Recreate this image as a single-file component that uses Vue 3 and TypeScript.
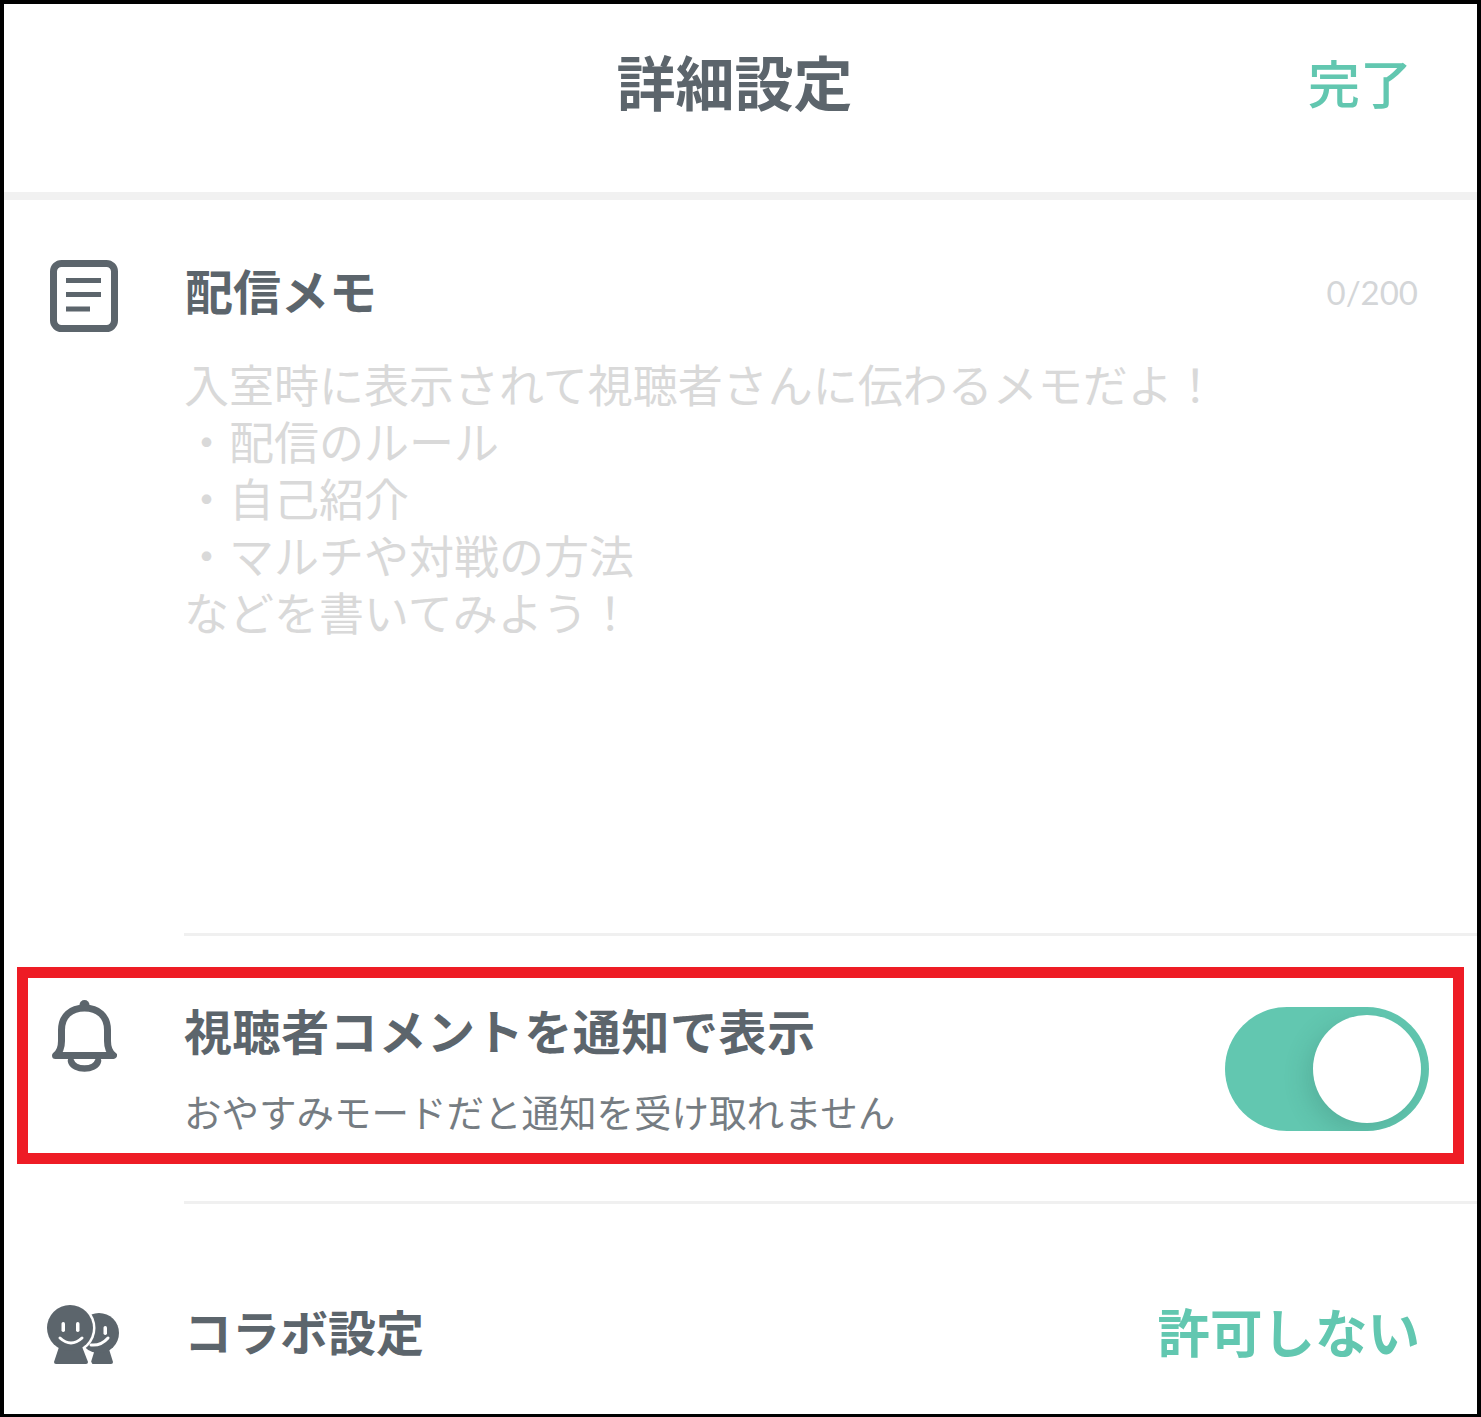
<script setup lang="ts">
const placeholder = `入室時に表示されて視聴者さんに伝わるメモだよ！
・配信のルール
・自己紹介
・マルチや対戦の方法
などを書いてみよう！`;
</script>

<template>
  <div class="frame">
    <header class="header">
      <h1 class="title">詳細設定</h1>
      <button class="done">完了</button>
    </header>

    <section class="memo">
      <svg class="icon-note" viewBox="0 0 68 72" width="68" height="72">
        <rect x="3.5" y="3.5" width="61" height="65" rx="8" fill="none" stroke="#5c656c" stroke-width="7" />
        <path d="M16 20.5H51M16 34.5H51M16 49H40" fill="none" stroke="#5c656c" stroke-width="5" />
      </svg>
      <div class="memo-body">
        <div class="memo-head">
          <h2 class="row-title">配信メモ</h2>
          <span class="count">0/200</span>
        </div>
        <p class="placeholder">{{ placeholder }}</p>
      </div>
    </section>

    <section class="notify">
      <svg class="icon-bell" viewBox="0 0 65 73" width="65" height="73">
        <circle cx="32.5" cy="5" r="5" fill="#5c656c" />
        <path d="M3.5 55.5Q9.5 51 9.5 41V30C9.5 16 19 8 32.5 8S55.5 16 55.5 30V41Q55.5 51 61.5 55.5Z" fill="none" stroke="#5c656c" stroke-width="7" stroke-linejoin="round" />
        <path d="M19 61C21 71 44 71 46 61" fill="none" stroke="#5c656c" stroke-width="6.5" stroke-linecap="round" />
      </svg>
      <div class="notify-text">
        <h2 class="row-title notify-title">視聴者コメントを通知で表示</h2>
        <p class="notify-sub">おやすみモードだと通知を受け取れません</p>
      </div>
      <div class="toggle">
        <span class="knob"></span>
      </div>
      <div class="highlight"></div>
    </section>

    <section class="collab">
      <svg class="icon-collab" viewBox="0 0 74 62" width="74" height="62">
        <path d="M50 42L45 58Q45 60 47 60H65Q67 60 67 58L62 42Z" fill="#5c656c" />
        <circle cx="53" cy="29" r="20" fill="#5c656c" />
        <rect x="57.5" y="22" width="3.5" height="9" rx="1.7" fill="#fff" />
        <path d="M45 41Q55 42 62 34" fill="none" stroke="#fff" stroke-width="3" stroke-linecap="round" />
        <circle cx="24" cy="24" r="25.5" fill="#fff" />
        <path d="M14 38L6 60H44L35 38Z" fill="#fff" stroke="#fff" stroke-width="4" />
        <path d="M14 40L8 58Q8 60 10 60H40Q42 60 42 58L35 40Z" fill="#5c656c" />
        <circle cx="24" cy="24" r="23" fill="#5c656c" />
        <rect x="15.5" y="18" width="3.5" height="10" rx="1.7" fill="#fff" />
        <rect x="30" y="18" width="3.5" height="10" rx="1.7" fill="#fff" />
        <path d="M14 34Q25 44 36 34" fill="none" stroke="#fff" stroke-width="3" stroke-linecap="round" />
      </svg>
      <span class="collab-label">コラボ設定</span>
      <span class="collab-value">許可しない</span>
    </section>
  </div>
</template>

<style>
html,
body {
  margin: 0;
  background: #fff;
}
</style>

<style scoped>
.frame {
  width: 1481px;
  height: 1417px;
  box-sizing: border-box;
  border: 4px solid #000;
  border-bottom-width: 3px;
  background: #fff;
  overflow: hidden;
  font-family: "Noto Sans CJK JP", "Noto Sans", sans-serif;
  color: #5c656c;
}

h1,
h2,
p {
  margin: 0;
  font-weight: inherit;
}

.header {
  height: 196px;
  box-sizing: border-box;
  padding: 0 12px 36px 0;
  display: flex;
  align-items: center;
  justify-content: center;
  position: relative;
  border-bottom: 8px solid #f1f1f1;
}

.title {
  font-size: 59px;
  line-height: 1;
  font-weight: 700;
}

.done {
  position: absolute;
  right: 65px;
  top: 52px;
  padding: 0;
  border: 0;
  background: none;
  font: inherit;
  font-size: 52px;
  line-height: 1;
  font-weight: 500;
  color: #62c7b0;
}

.memo {
  display: flex;
  gap: 67px;
  padding: 60px 59px 0 46px;
  height: 736px;
  box-sizing: border-box;
  position: relative;
}

.memo::after {
  content: "";
  position: absolute;
  left: 180px;
  right: 0;
  bottom: 0;
  height: 3px;
  background: #f0f0f0;
}

.icon-note,
.icon-bell,
.icon-collab {
  flex: none;
}

.memo-body {
  flex: 1;
  min-width: 0;
}

.memo-head {
  display: flex;
  justify-content: space-between;
  height: 64px;
}

.row-title {
  font-size: 48px;
  line-height: 64px;
  font-weight: 700;
}

.memo-head .row-title {
  margin-top: -3px;
}

.count {
  font-family: "Lato", "Noto Sans", sans-serif;
  font-size: 33px;
  line-height: 64px;
  color: #d4d6d8;
}

.placeholder {
  margin: 31px 0 0 -1px;
  font-size: 45px;
  line-height: 57px;
  white-space: pre-line;
  color: #d9d9d9;
}

.notify {
  position: relative;
  height: 268px;
  box-sizing: border-box;
  padding: 64px 48px 0 48px;
  display: flex;
}

.notify::after {
  content: "";
  position: absolute;
  left: 180px;
  right: 0;
  bottom: 0;
  height: 3px;
  background: #f0f0f0;
}

.notify-text {
  margin: -3px 0 0 67px;
  flex: 1;
  min-width: 0;
}

.notify-title {
  font-size: 48px;
  line-height: 64px;
  letter-spacing: 0.6px;
}

.notify-sub {
  margin-top: 25px;
  font-size: 37.5px;
  line-height: 50px;
  color: #757c82;
}

.toggle {
  flex: none;
  width: 204px;
  height: 124px;
  margin-top: 7px;
  padding-right: 8px;
  box-sizing: border-box;
  border-radius: 62px;
  background: #62c7b0;
  display: flex;
  align-items: center;
  justify-content: flex-end;
  overflow: hidden;
}

.knob {
  width: 108px;
  height: 108px;
  border-radius: 50%;
  background: #fff;
  box-shadow: -6px 8px 24px rgba(40, 90, 80, 0.2);
}

.highlight {
  position: absolute;
  left: 13px;
  right: 13px;
  top: 31px;
  height: 197px;
  box-sizing: border-box;
  border: 11px solid #ee1c25;
  pointer-events: none;
}

.collab {
  padding: 100px 57px 0 42px;
  display: flex;
  align-items: flex-start;
}

.collab-label {
  margin: -6px 0 0 64px;
  flex: 1;
  font-size: 48px;
  line-height: 64px;
  font-weight: 700;
}

.collab-value {
  margin-top: -6px;
  font-size: 52.5px;
  line-height: 64px;
  font-weight: 700;
  color: #62c7b0;
}
</style>
